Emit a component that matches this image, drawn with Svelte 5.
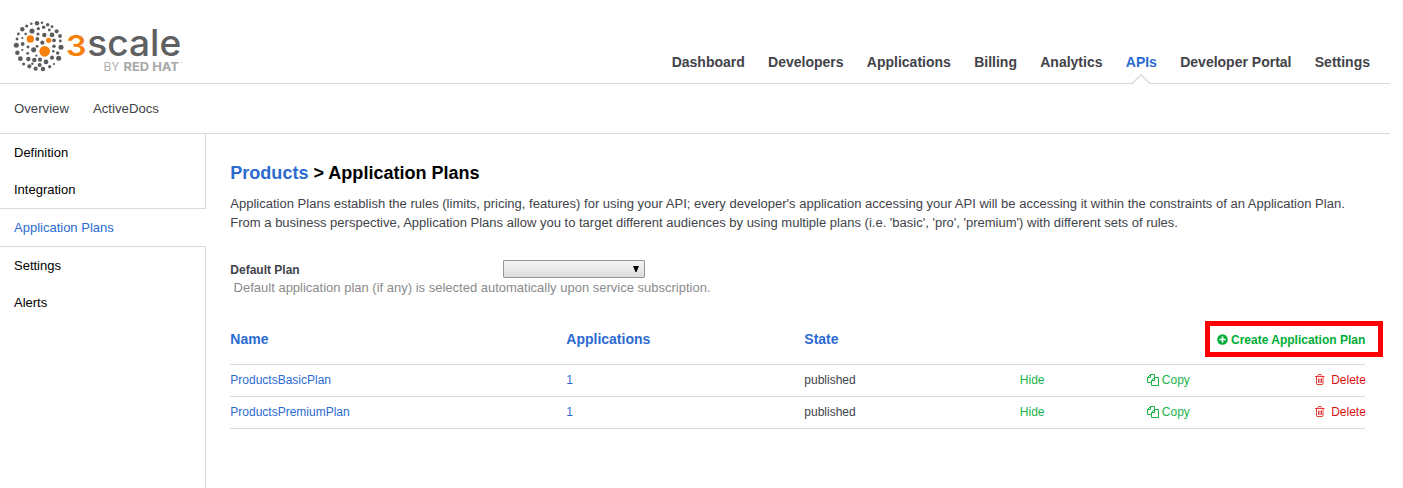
<script>
  const mainNav = ['Dashboard', 'Developers', 'Applications', 'Billing', 'Analytics', 'APIs', 'Developer Portal', 'Settings'];
  const sideNav = ['Definition', 'Integration', 'Application Plans', 'Settings', 'Alerts'];
  const plans = [
    { name: 'ProductsBasicPlan', applications: 1, state: 'published' },
    { name: 'ProductsPremiumPlan', applications: 1, state: 'published' }
  ];
  // Logo mark dots: x, y, radius
  const dots = [
    [87,25,7],[70,26,4],[102,23,4],[56,33,5],[119,29,5.5],[132,35,4.5],[43,43,7],[91,41,5],[107,37,5.5],
    [72,48,8],[124,45,4.5],[146,49,6.5],[31,57,4.5],[53,57,4],[90,57,5],[109,60,7],[132,60,7.5],[156,63,6],
    [27,72,4.5],[43,69,3.5],[88,72,6],[138,76,6],[157,78,4.5],[25,91,8],[44,87,6],[103,83,6.5],[60,96,4.5],
    [87,94,4.5],[138,94,5.5],[159,97,8],[28,113,7],[43,105,3.5],[77,104,8],[149,114,5.5],[136,109,4],
    [59,115,4.5],[37,131,7.5],[61,132,7],[79,135,7],[85,122,3.5],[96,134,6.5],[132,128,6.5],[152,130,8],
    [114,141,7.5],[47,147,5],[95,150,6.5],[64,154,6.5],[83,161,6.5],[105,162,7],[125,155,5],[138,147,3.5],[73,146,4]
  ];
  const accents = [[67,72,11],[122,76,8],[110,109,16]];
</script>

<div class="page">
  <header>
    <svg class="logo" width="180" height="62" viewBox="0 0 180 62" aria-label="3scale by Red Hat">
      <g transform="scale(.33333)">
        {#each dots as [x, y, r]}<circle cx={x} cy={y} r={r * .95} fill="#5b5c5e" />{/each}
        {#each accents as [x, y, r]}<circle cx={x} cy={y} {r} fill="#f77f0b" />{/each}
      </g>
      <text x="58" y="41" font-size="28" font-weight="600" fill="#f77f0b" textLength="20.5" lengthAdjust="spacingAndGlyphs">3</text>
      <text x="79.2" y="41" font-size="36.5" font-weight="500" fill="#5f6062" textLength="94" lengthAdjust="spacingAndGlyphs">scale</text>
      <text x="95.5" y="55.6" font-size="12.3" fill="#b0b0b0" textLength="16" lengthAdjust="spacingAndGlyphs">BY</text>
      <text x="115.5" y="55.6" font-size="12.3" font-weight="700" fill="#a8a8a8" textLength="55.5" lengthAdjust="spacingAndGlyphs">RED HAT</text>
      <circle cx="173.5" cy="47.5" r=".7" fill="#ccc" />
    </svg>
    <nav class="main-nav">
      {#each mainNav as item}
        <a class:active={item === 'APIs'}>{item}{#if item === 'APIs'}<svg class="notch" width="20" height="11" viewBox="0 0 20 11"><path d="M1 10 10 1 19 10V11H1Z" fill="#fff" /><path d="M.5 9.5H1L10 1l9 8.5h.5" fill="none" stroke="#dadada" stroke-width="1.4" /></svg>{/if}</a>
      {/each}
    </nav>
  </header>

  <nav class="sub-nav"><a>Overview</a><a>ActiveDocs</a></nav>

  <div class="columns">
    <aside>
      {#each sideNav as item}
        <a class:current={item === 'Application Plans'}>{item}</a>
      {/each}
      <div class="rest"></div>
    </aside>
    <main>
      <h1><a>Products</a> &gt; Application Plans</h1>
      <p class="intro">Application Plans establish the rules (limits, pricing, features) for using your API; every developer's application accessing your API will be accessing it within the constraints of an Application Plan. From a business perspective, Application Plans allow you to target different audiences by using multiple plans (i.e. 'basic', 'pro', 'premium') with different sets of rules.</p>

      <div class="field">
        <span class="label">Default Plan</span>
        <div class="select"><svg width="6" height="6" viewBox="0 0 6 6"><path d="M0 0h6L3.500 6h-1Z" fill="#000" /></svg></div>
      </div>
      <p class="hint">Default application plan (if any) is selected automatically upon service subscription.</p>

      <div class="table">
        <div class="row head">
          <a>Name</a><a>Applications</a><a>State</a>
          <div class="create">
            <svg width="11" height="11" viewBox="0 0 11 11"><circle cx="5.5" cy="5.5" r="5.3" fill="#00ae37" /><path d="M5.5 2.4v6.2M2.4 5.5h6.2" stroke="#fff" stroke-width="1.7" /></svg>
            <span>Create Application Plan</span>
          </div>
        </div>
        {#each plans as plan}
          <div class="row">
            <a>{plan.name}</a><a>{plan.applications}</a><span>{plan.state}</span>
            <span class="green">Hide</span>
            <span class="green action">
              <svg width="12" height="12" viewBox="0 0 12 12" fill="none" stroke="#19b34b"><path d="M4.5 8.5h-4v-5l3-3h4v3M3.5.5v3h-3M7.5 3.5h4v8h-7v-5l3-3v3h-3" /></svg>
              Copy
            </span>
            <span class="red action">
              <svg width="10" height="12" viewBox="0 0 10 12" fill="none" stroke="#de2020"><path d="M0 2.5h9.500M3 2.500v-1l.5-1h2.500l.5 1v1M1.500 2.500v7.500l.5.5h5.500l.5-.5v-7.500M3.500 4.500v4.500M5 4.500v4.500M6.500 4.500v4.500" stroke-width=".85" /></svg>
              Delete
            </span>
          </div>
        {/each}
      </div>
    </main>
  </div>
</div>

<style>
  :global(body) { background: #fff; overflow: hidden; }
  .page { width: 1390px; height: 488px; display: flex; flex-direction: column; font: 13px/19px "Liberation Sans", Arial, sans-serif; color: #414349; }
  header { flex: none; height: 83px; border-bottom: 1px solid #dadada; display: flex; justify-content: space-between; align-items: flex-start; }
  .logo { margin: 15px 0 0 8px; font-family: Inter, sans-serif; }
  .main-nav { display: flex; gap: 23.3px; padding: 52px 20px 0 0; font-size: 14px; line-height: 20px; font-weight: bold; }
  .main-nav a { position: relative; }
  .main-nav .active { color: #2b6bd0; }
  .notch { position: absolute; left: 5px; top: 22px; }
  .sub-nav { flex: none; height: 49px; border-bottom: 1px solid #dadada; display: flex; align-items: center; gap: 24px; padding-left: 14px; font-size: 13.2px; }
  .columns { flex: 1; display: flex; min-height: 0; }
  aside { width: 206px; flex: none; display: flex; flex-direction: column; color: #000; }
  aside a { height: 37px; line-height: 37px; padding-left: 14px; border-right: 1px solid #dadada; flex: none; }
  aside .current { color: #2b6bd0; border: solid #dadada; border-width: 1px 0; }
  .rest { flex: 1; border-right: 1px solid #dadada; }
  main { flex: 1; padding: 28px 24.7px 0 24.3px; }
  h1 { margin: 0; font-size: 18.05px; line-height: 22px; color: #000; }
  h1 a { color: #2b6bd0; }
  .intro { margin: 10px 0 0; width: 1130px; font-size: 13.02px; }
  .field { display: flex; margin-top: 28px; height: 18px; }
  .label { width: 272.7px; font-size: 12px; font-weight: bold; line-height: 20px; }
  .select { box-sizing: border-box; width: 142px; height: 18px; border: 1px solid #969696; border-radius: 1px; background: linear-gradient(#f5f5f5, #dcdcdc); display: flex; justify-content: flex-end; padding: 5px 5px 0 0; }
  .hint { margin: 0 0 0 3.3px; color: #8b8b8b; line-height: 20px; }
  .table { margin-top: 16px; font-size: 12px; }
  .row { display: grid; grid-template-columns: 336px 238px 215.500px 127px 1fr auto; height: 31px; line-height: 31px; border-bottom: 1px solid #dadada; }
  .row > a { color: #2b6bd0; }
  .head { height: 50px; grid-template-columns: 336px 238px 1fr 178px; font-size: 14px; font-weight: bold; line-height: 50px; }
  .create { box-sizing: border-box; width: 178px; height: 36px; margin: 7px 0 0 18px; border: 5px solid #f00; display: flex; align-items: center; gap: 2.700px; padding: 2px 0 0 7px; font-size: 12px; line-height: 24px; color: #00ae37; white-space: nowrap; }
  .create svg { margin-top: -2px; }
  .green { color: #19b34b; }
  .red { color: #d81111; }
  .action { display: flex; align-items: center; gap: 3px; }
  .action svg { margin-top: -2px; }
  .red.action { gap: 6px; margin-right: -.5px; }
</style>
